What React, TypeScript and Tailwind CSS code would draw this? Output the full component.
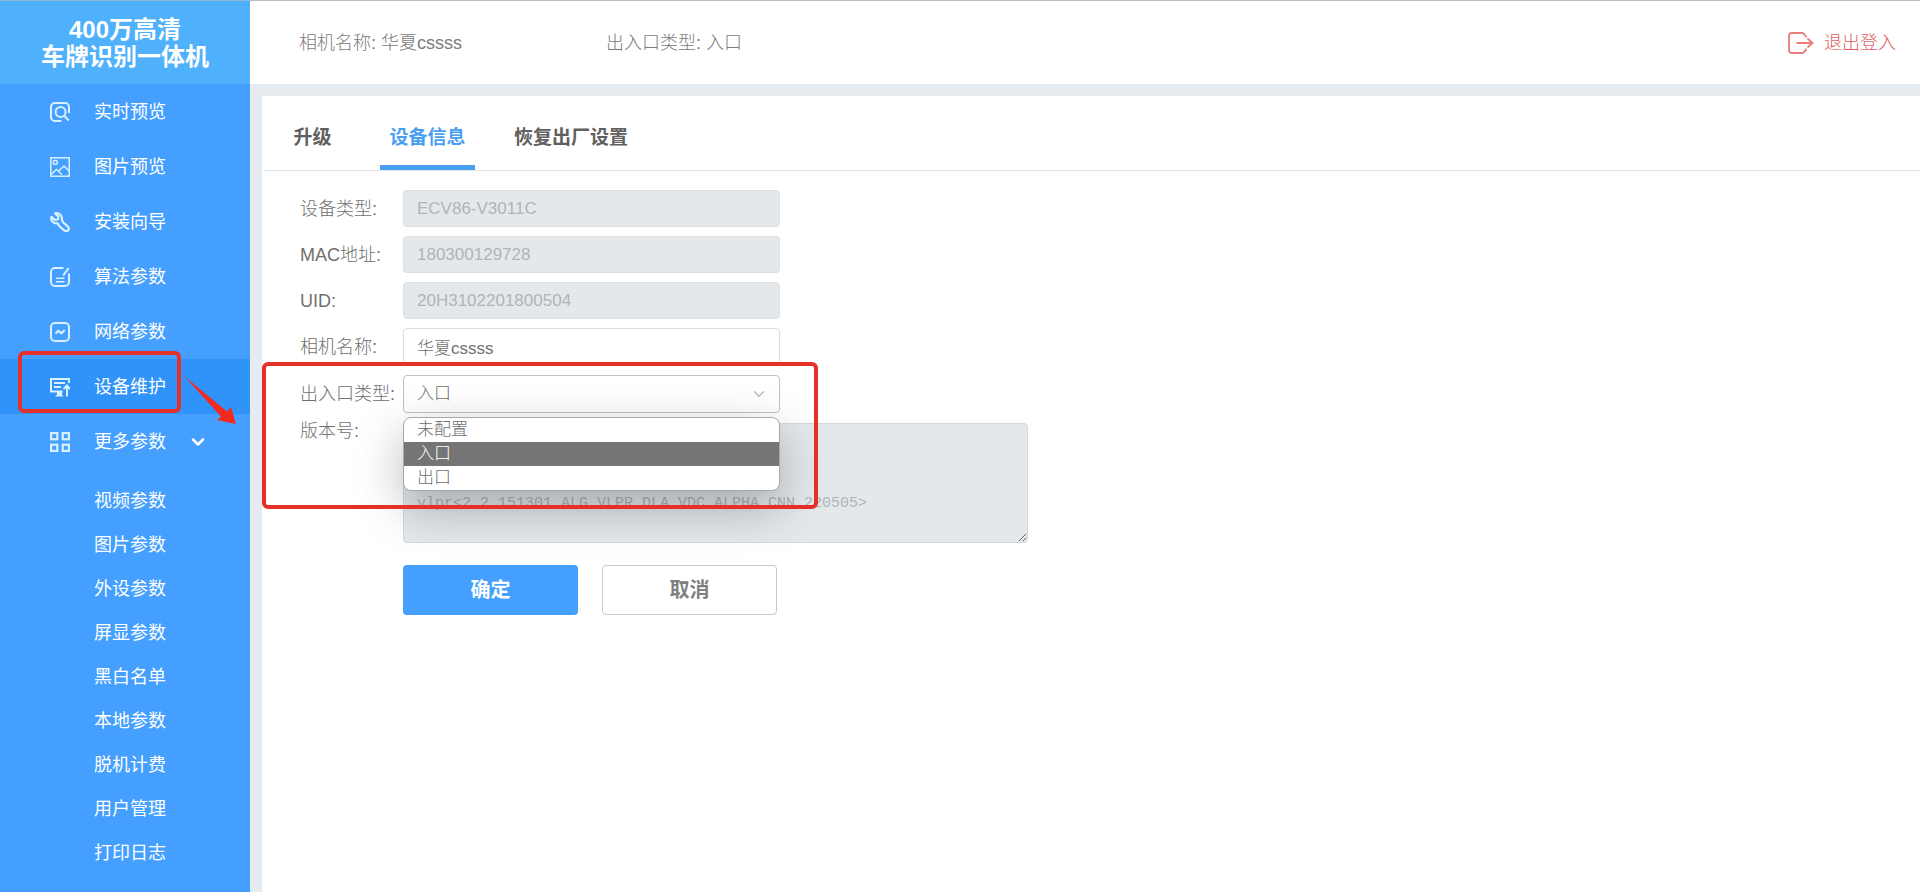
import React, { useState } from 'react'
import { ChevronDown } from 'lucide-react'

type IconProps = { className?: string }

const strokeProps = {
  viewBox: '0 0 20 20',
  fill: 'none',
  stroke: 'currentColor',
  strokeWidth: 2,
  'aria-hidden': true,
} as const

const PreviewIcon = ({ className }: IconProps) => (
  <svg {...strokeProps} className={className}>
    <path d="M11.5 19H5a4 4 0 0 1-4-4V5a4 4 0 0 1 4-4h10a4 4 0 0 1 4 4v6" />
    <circle cx="10.600" cy="10" r="5" />
    <path d="M14 13.500l4.800 5" />
  </svg>
)

const PictureIcon = ({ className }: IconProps) => (
  <svg {...strokeProps} strokeWidth={1.5} className={className}>
    <rect x="0.8" y="0.8" width="18.4" height="18.4" />
    <rect x="3.4" y="3.4" width="3.8" height="3.8" rx="1" />
    <path d="M1 17.5l5.5-5 3.8 3.5M8.5 14l5.5-5 5.2 5" />
    <path d="M10.3 16l1.8 1.5" />
  </svg>
)

const WrenchIcon = ({ className }: IconProps) => (
  <svg {...strokeProps} strokeWidth={2.200} className={className}>
    <path
      d="M5 1.300l3.400 3.400-.5 2.800-2.800.5L1.500 4.800C.6 8 2.600 11.200 6.200 11.400l2 .2 1 2.400 5 4.300c1.400 1.200 3.200 1 4 0s.7-2.700-.3-3.700l-4.700-4.200-1.400-2.600C12.600 4.200 9.800.6 5 1.300z"
      strokeLinejoin="round"
    />
  </svg>
)

const AlgorithmIcon = ({ className }: IconProps) => (
  <svg {...strokeProps} className={className}>
    <path d="M13.500 1H5a4 4 0 0 0-4 4v10a4 4 0 0 0 4 4h10a4 4 0 0 0 4-4V6.500" />
    <path d="M18.600 1.200l-5.400 7.300" />
    <path d="M6 11.200h8.500M6 14.800h8.500" strokeWidth="1.500" />
  </svg>
)

const NetworkIcon = ({ className }: IconProps) => (
  <svg {...strokeProps} className={className}>
    <rect x="1" y="1" width="18" height="18" rx="4" />
    <path d="M5.500 11.500l3-2.800 2.800 2.600L14.800 8" strokeWidth="2.200" />
  </svg>
)

const MaintainIcon = ({ className }: IconProps) => (
  <svg {...strokeProps} className={className}>
    <path d="M19 6V2H1v12.500h11.500M4 6h11M4 10h7" />
    <path d="M7 15h5v2.500l1.500 2H5l2-2z" fill="currentColor" stroke="none" />
    <path d="M17 19.500V9M13.500 12l3.500-3.500 3 3.500" />
  </svg>
)

const MoreIcon = ({ className }: IconProps) => (
  <svg {...strokeProps} strokeWidth={2.200} className={className}>
    <rect x="1.100" y="1.100" width="6.200" height="6.200" />
    <rect x="12.700" y="1.100" width="6.200" height="6.200" />
    <rect x="1.100" y="12.700" width="6.200" height="6.200" />
    <rect x="12.700" y="12.700" width="6.200" height="6.200" />
  </svg>
)

const LogoutIcon = ({ className }: IconProps) => (
  <svg viewBox="0 0 26 22" fill="none" stroke="currentColor" strokeWidth="1.800" aria-hidden className={className}>
    <path d="M18 5.500V4.500L14.800 1H3.500A2.500 2.500 0 0 0 1 3.500v15A2.500 2.500 0 0 0 3.500 21h11.300L18 18v-1.500" />
    <path d="M8.500 11H24M19.500 6.500L24.500 11l-5 4.500" />
  </svg>
)

const menu = [
  { label: '实时预览', Icon: PreviewIcon },
  { label: '图片预览', Icon: PictureIcon },
  { label: '安装向导', Icon: WrenchIcon },
  { label: '算法参数', Icon: AlgorithmIcon },
  { label: '网络参数', Icon: NetworkIcon },
  { label: '设备维护', Icon: MaintainIcon, active: true },
]

const subMenu = [
  '视频参数',
  '图片参数',
  '外设参数',
  '屏显参数',
  '黑白名单',
  '本地参数',
  '脱机计费',
  '用户管理',
  '打印日志',
]

const tabs = [
  { label: '升级', width: 'w-[95px]' },
  { label: '设备信息', width: 'w-[95px]' },
  { label: '恢复出厂设置', width: 'w-[152px]' },
]

const readonlyFields = [
  { id: 'type', label: '设备类型:', value: 'ECV86-V3011C' },
  { id: 'mac', label: 'MAC地址:', value: '180300129728' },
  { id: 'uid', label: 'UID:', value: '20H3102201800504' },
]

const gateTypes = ['未配置', '入口', '出口']

function Sidebar() {
  return (
    <aside className="w-[250px] shrink-0 bg-[#449fff] text-white">
      <h1 className="flex h-[84px] flex-col items-center justify-center border-t border-[#8fb8d8] bg-[#4fb0fb] text-2xl leading-[27px] font-bold">
        <span>400万高清</span>
        <span>车牌识别一体机</span>
      </h1>
      <nav>
        {menu.map(({ label, Icon, active }) => (
          <a
            key={label}
            href="#"
            className={`flex h-[55px] items-center gap-6 pl-[50px] text-lg ${active ? 'bg-[#3093fa]' : ''}`}
          >
            <Icon className="h-5 w-5 text-[#d8f0ff]" />
            {label}
          </a>
        ))}
        <button
          type="button"
          aria-expanded="true"
          className="flex h-[55px] w-full items-center pl-[50px] text-lg"
        >
          <MoreIcon className="mr-6 h-5 w-5 text-[#d8f0ff]" />
          更多参数
          <ChevronDown className="ml-[22px] h-5 w-5" strokeWidth={3} />
        </button>
        <ul className="py-[10px]">
          {subMenu.map((label) => (
            <li key={label}>
              <a href="#" className="flex h-11 items-center pl-[94px] text-lg">
                {label}
              </a>
            </li>
          ))}
        </ul>
      </nav>
    </aside>
  )
}

function Header() {
  return (
    <header className="flex h-[84px] items-center border-t border-[#bdbdbd] bg-white pr-6 pl-[49px] text-lg text-[#7c7c7c]">
      <span className="w-[307px]">相机名称: 华夏cssss</span>
      <span>出入口类型: 入口</span>
      <a href="#" className="ml-auto flex items-center gap-[10px] text-[#e0605f]">
        <LogoutIcon className="h-[22px] w-[26px] text-[#e87c7c]" />
        退出登入
      </a>
    </header>
  )
}

function DeviceForm() {
  const [name, setName] = useState('华夏cssss')
  const [gate, setGate] = useState('入口')

  return (
    <form className="pt-[19px] pl-[38px] text-[17px] text-[#707070]" onSubmit={(e) => e.preventDefault()}>
      <div className="flex flex-col gap-[9px]">
        {readonlyFields.map((field) => (
          <div key={field.id} className="flex items-center">
            <label htmlFor={field.id} className="w-[103px] shrink-0 text-lg">
              {field.label}
            </label>
            <input
              id={field.id}
              disabled
              value={field.value}
              className="h-[37px] w-[377px] rounded border border-[#dde0e3] bg-[#e4e8eb] px-[13px] text-[#afb4b9]"
            />
          </div>
        ))}
        <div className="flex items-center">
          <label htmlFor="name" className="w-[103px] shrink-0 text-lg">
            相机名称:
          </label>
          <input
            id="name"
            value={name}
            onChange={(e) => setName(e.target.value)}
            className="h-[37px] w-[377px] rounded border border-[#dcdcdc] bg-white px-[13px]"
          />
        </div>
      </div>
      <div className="mt-[10px] flex items-center">
        <label htmlFor="gate" className="w-[103px] shrink-0 text-lg">
          出入口类型:
        </label>
        <div className="relative w-[377px]">
          <select
            id="gate"
            value={gate}
            onChange={(e) => setGate(e.target.value)}
            className="h-[38px] w-full appearance-none rounded border border-[#c0c0c0] bg-white px-[13px]"
          >
            {gateTypes.map((type) => (
              <option key={type}>{type}</option>
            ))}
          </select>
          <ChevronDown className="pointer-events-none absolute top-[10px] right-3 h-[18px] w-[18px] text-[#bcbcbc]" />
          <ul
            role="listbox"
            aria-label="出入口类型"
            className="absolute top-[42px] left-0 z-10 w-full overflow-hidden rounded-lg border border-[#a8a8a8] bg-white shadow-[0_16px_48px_rgba(0,0,0,0.28)]"
          >
            {gateTypes.map((type) => (
              <li
                key={type}
                role="option"
                aria-selected={type === gate}
                onClick={() => setGate(type)}
                className={`px-[13px] leading-6 ${type === gate ? 'bg-[#757575] text-white' : ''}`}
              >
                {type}
              </li>
            ))}
          </ul>
        </div>
      </div>
      <div className="mt-[10px] flex items-start">
        <label htmlFor="version" className="w-[103px] shrink-0 text-lg leading-4">
          版本号:
        </label>
        <textarea
          id="version"
          disabled
          value={'\n\n\nvlpr<2.2.151301_ALG_VLPR_DLA_VDC_ALPHA_CNN_220505>'}
          className="h-[120px] w-[625px] rounded border border-[#d6d9dc] bg-[#e4e8eb] px-[13px] py-[6px] font-['Liberation_Mono','Noto_Sans_CJK_SC',monospace] text-[15px] leading-[21px] text-[#b0b4b8]"
        />
      </div>
      <div className="mt-[22px] flex gap-6 pl-[103px] text-xl font-bold">
        <button type="submit" className="h-[50px] w-[175px] rounded bg-[#449fff] text-white">
          确定
        </button>
        <button
          type="button"
          className="h-[50px] w-[175px] rounded border border-[#c8c8c8] bg-white/60 text-[#808080]"
        >
          取消
        </button>
      </div>
    </form>
  )
}

// Red marks that point the reader from the menu item to the opened drop-down
function Marks() {
  return (
    <div className="pointer-events-none absolute inset-0 z-20" aria-hidden>
      <div className="absolute top-[351px] left-[18px] h-[62px] w-[163px] rounded-md border-4 border-[#e5302a]" />
      <div className="absolute top-[362px] left-[262px] h-[147px] w-[556px] rounded-md border-4 border-[#e5302a]" />
      <svg className="absolute top-[374px] left-[182px] h-[52px] w-[56px]" viewBox="182 374 56 52">
        <path d="M184 376L227 411.500l4-4.500 5 17-19-4 4-3.500z" fill="#f5291f" />
      </svg>
    </div>
  )
}

export default function App() {
  const [tab, setTab] = useState('设备信息')

  return (
    <div className="relative flex min-h-screen bg-[#e6ebf0] font-['Liberation_Sans','Noto_Sans_CJK_SC',sans-serif]">
      <Sidebar />
      <div className="flex min-w-0 flex-1 flex-col font-light">
        <Header />
        <main className="mt-3 ml-3 flex-1 bg-white">
          <div className="ml-[2px] flex gap-5 border-b border-[#e1e5e9] pl-px" role="tablist">
            {tabs.map(({ label, width }) => (
              <button
                key={label}
                type="button"
                role="tab"
                aria-selected={tab === label}
                onClick={() => setTab(label)}
                className={`h-[74px] border-b-[5px] pt-4 text-[19px] font-bold ${width} ${
                  tab === label ? 'border-[#4a9ff0] text-[#4a9ff0]' : 'border-transparent text-[#606060]'
                }`}
              >
                {label}
              </button>
            ))}
          </div>
          <DeviceForm />
        </main>
      </div>
      <Marks />
    </div>
  )
}
